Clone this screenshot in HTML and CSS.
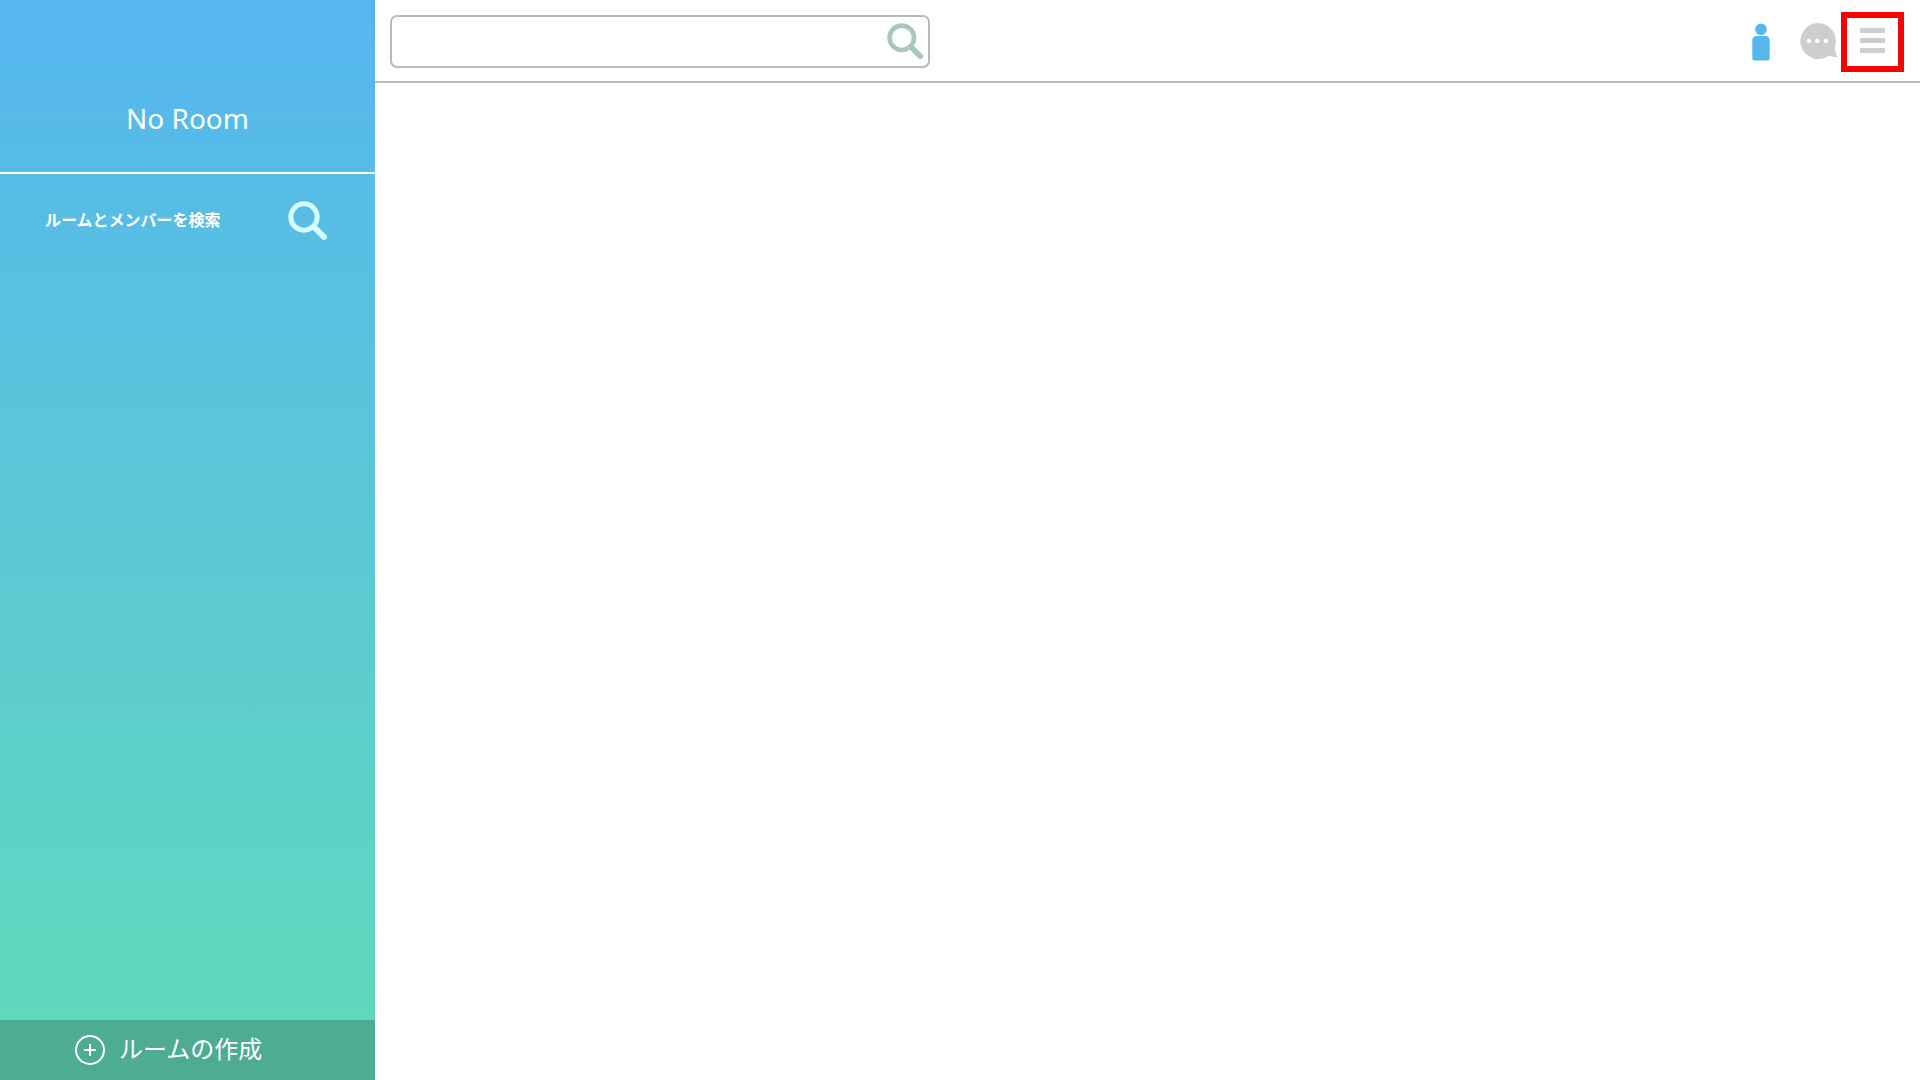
FILE: index.html
```
<!DOCTYPE html>
<html lang="ja">
<head>
<meta charset="utf-8">
<title>No Room</title>
<link rel="stylesheet" href="styles.css">
</head>
<body>
<div class="sidebar">
  <h1 class="room-name">No Room</h1>
  <form class="room-search">
    <input type="text" class="room-input" placeholder="ルームとメンバーを検索" aria-label="ルームとメンバーを検索">
    <button type="button" class="icon-button" aria-label="検索">
      <svg class="room-search-icon" width="40" height="40" viewBox="0 0 40 40">
        <circle cx="16" cy="16" r="13.2" />
        <path d="M26 26L36 36" />
      </svg>
    </button>
  </form>
  <button type="button" class="create-room">
    <svg width="30" height="30" viewBox="0 0 30 30">
      <circle cx="15" cy="15" r="14" />
      <path d="M9 15H21M15 9V21" />
    </svg>
    <span>ルームの作成</span>
  </button>
</div>
<div class="main">
  <header class="header">
    <form class="search-box">
      <input type="text" class="search-input" aria-label="メッセージを検索">
      <button type="button" class="icon-button" aria-label="検索">
        <svg class="search-icon" width="37" height="37" viewBox="0 0 40 40">
          <circle cx="16" cy="16" r="13.2" />
          <path d="M26 26L36 36" />
        </svg>
      </button>
    </form>
    <nav class="header-menu">
      <button type="button" class="icon-button" aria-label="プロフィール">
        <svg width="18" height="38" viewBox="0 0 18 38" fill="#55b7ee">
          <circle cx="9" cy="6.3" r="5.8" />
          <path d="M5 13H13Q17.7 13 17.7 18V35.5Q17.7 37.5 15.7 37.5H2.3Q.3 37.5 .3 35.5V18Q.3 13 5 13Z" />
        </svg>
      </button>
      <button type="button" class="icon-button talk" aria-label="トーク">
        <svg width="38" height="38" viewBox="0 0 38 38">
          <path fill="#cecece" d="M18 0A18 18 0 1 0 29 32.5Q33 34 37.5 34.3Q35 29 34.5 25A18 18 0 0 0 18 0Z" />
          <g fill="#fff">
            <circle cx="9" cy="18" r="2.3" />
            <circle cx="17.3" cy="18" r="2.3" />
            <circle cx="26" cy="18" r="2.3" />
          </g>
        </svg>
      </button>
      <button type="button" class="menu-button" aria-label="メニュー">
        <span></span>
        <span></span>
        <span></span>
      </button>
    </nav>
  </header>
</div>
</body>
</html>
```

FILE: styles.css
```
* {
  box-sizing: border-box;
}

body {
  display: flex;
  min-height: 100vh;
  margin: 0;
  font-family: "Noto Sans", "Noto Sans CJK JP", sans-serif;
  background-color: #fff;
}

button,
input {
  margin: 0;
  padding: 0;
  border: none;
  background: none;
  font-family: inherit;
}

button {
  cursor: pointer;
}

svg {
  display: block;
  flex-shrink: 0;
}

/* sidebar */
.sidebar {
  display: flex;
  flex-direction: column;
  flex-shrink: 0;
  width: 375px;
  background: linear-gradient(#55b6f0, #60d8bc 94%);
}

.room-name {
  margin: 0;
  padding: 98px 0 34px;
  border-bottom: 2px solid #fff;
  color: #fff;
  font-size: 28px;
  font-weight: normal;
  line-height: 40px;
  text-align: center;
}

.room-search {
  display: flex;
  align-items: center;
  justify-content: space-between;
  padding: 27px 47px 0 45px;
}

.room-input {
  flex: 1;
  min-width: 0;
  height: 40px;
  padding-bottom: 2px;
  color: #fff;
  font-size: 16px;
  font-weight: bold;
}

.room-input::placeholder {
  color: #fff;
  opacity: 1;
}

.room-search-icon,
.search-icon {
  fill: none;
  stroke: #d4fffe;
  stroke-width: 5;
}

.room-search-icon path,
.search-icon path {
  stroke-width: 6;
  stroke-linecap: round;
}

.search-icon {
  stroke: #a9c6c3;
}

.create-room {
  display: flex;
  align-items: center;
  gap: 14px;
  height: 60px;
  margin-top: auto;
  padding-left: 75px;
  background-color: #4dac91;
  color: #fff;
  font-size: 24px;
  line-height: 30px;
}

.create-room span {
  padding-bottom: 2px;
}

.create-room svg {
  fill: none;
  stroke: #fff;
  stroke-width: 2;
}

/* main */
.main {
  flex: 1;
}

.header {
  display: flex;
  align-items: center;
  justify-content: space-between;
  height: 83px;
  padding: 2px 16px 0 15px;
  border-bottom: 2px solid #bababa;
}

.search-box {
  display: flex;
  align-items: center;
  width: 540px;
  height: 53px;
  padding-right: 4px;
  border: 2px solid #bababa;
  border-radius: 7px;
}

.search-input {
  flex: 1;
  height: 100%;
  padding: 0 10px;
  font-size: 16px;
}

.header-menu {
  display: flex;
  align-items: center;
}

.talk {
  margin: 0 3px 0 30px;
}

.menu-button {
  display: flex;
  flex-direction: column;
  align-items: center;
  justify-content: center;
  gap: 5px;
  width: 63px;
  height: 60px;
  padding-bottom: 3px;
  border: 6px solid #f00;
}

.menu-button span {
  width: 25px;
  height: 5px;
  background-color: #cecece;
}
```
